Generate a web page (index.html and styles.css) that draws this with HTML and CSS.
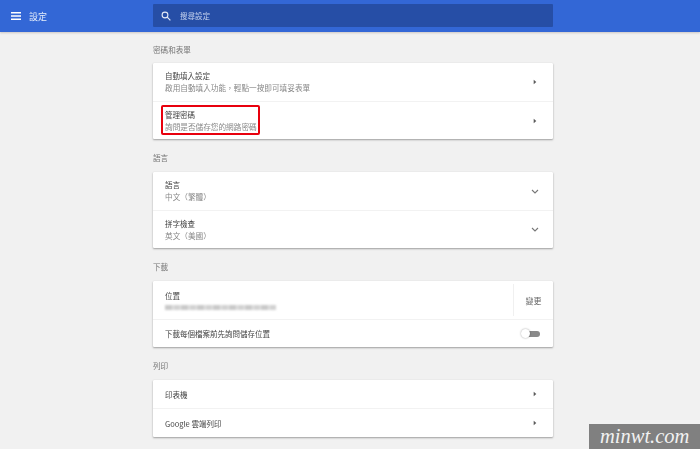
FILE: index.html
```html
<!DOCTYPE html>
<html lang="zh-Hant">
<head>
<meta charset="utf-8">
<title>設定</title>
<link rel="stylesheet" href="styles.css">
</head>
<body>
<header class="topbar">
  <div class="brand">
    <svg class="menu-icon" viewBox="0 0 10 8" width="10" height="8"><path d="M0 0h10v1.4H0zM0 3.3h10v1.4H0zM0 6.6h10V8H0z" fill="#fff"/></svg>
    <span class="brand-title">設定</span>
  </div>
  <div class="search">
    <svg class="search-icon" viewBox="0 0 10 10" width="10" height="10"><circle cx="4" cy="4" r="2.9" fill="none" stroke="#e4eaf7" stroke-width="1.1"/><path d="M6.2 6.2 9.4 9.4" stroke="#e4eaf7" stroke-width="1.2"/></svg>
    <span class="search-text">搜尋設定</span>
  </div>
</header>
<main class="content">
  <section class="section">
    <h2 class="section-title">密碼和表單</h2>
    <div class="card">
      <div class="row row-two">
        <div class="row-text"><div class="row-main">自動填入設定</div><div class="row-sub">啟用自動填入功能，輕點一按即可填妥表單</div></div>
        <svg class="arrow" viewBox="0 0 4 6" width="4" height="6"><path d="M0.7 0.8 3.3 3 0.7 5.2z" fill="#5a5a5a"/></svg>
      </div>
      <div class="row row-two row-border">
        <div class="row-text"><div class="row-main">管理密碼</div><div class="row-sub">詢問是否儲存您的網路密碼</div></div>
        <svg class="arrow" viewBox="0 0 4 6" width="4" height="6"><path d="M0.7 0.8 3.3 3 0.7 5.2z" fill="#5a5a5a"/></svg>
        <div class="highlight"></div>
      </div>
    </div>
  </section>
  <section class="section">
    <h2 class="section-title">語言</h2>
    <div class="card">
      <div class="row row-two">
        <div class="row-text"><div class="row-main">語言</div><div class="row-sub">中文（繁體）</div></div>
        <svg class="chevron" viewBox="0 0 8 5" width="8" height="5"><path d="M1 1 4 4 7 1" fill="none" stroke="#777" stroke-width="1.1"/></svg>
      </div>
      <div class="row row-two row-border">
        <div class="row-text"><div class="row-main">拼字檢查</div><div class="row-sub">英文（美國）</div></div>
        <svg class="chevron" viewBox="0 0 8 5" width="8" height="5"><path d="M1 1 4 4 7 1" fill="none" stroke="#777" stroke-width="1.1"/></svg>
      </div>
    </div>
  </section>
  <section class="section">
    <h2 class="section-title">下載</h2>
    <div class="card">
      <div class="row row-location">
        <div class="row-text"><div class="row-main">位置</div><div class="blurred"></div></div>
        <div class="change"><span>變更</span></div>
      </div>
      <div class="row row-one row-border">
        <div class="row-main">下載每個檔案前先詢問儲存位置</div>
        <div class="toggle"><span class="toggle-track"></span><span class="toggle-knob"></span></div>
      </div>
    </div>
  </section>
  <section class="section">
    <h2 class="section-title">列印</h2>
    <div class="card">
      <div class="row row-print">
        <div class="row-main">印表機</div>
        <svg class="arrow" viewBox="0 0 4 6" width="4" height="6"><path d="M0.7 0.8 3.3 3 0.7 5.2z" fill="#5a5a5a"/></svg>
      </div>
      <div class="row row-print row-border">
        <div class="row-main">Google 雲端列印</div>
        <svg class="arrow" viewBox="0 0 4 6" width="4" height="6"><path d="M0.7 0.8 3.3 3 0.7 5.2z" fill="#5a5a5a"/></svg>
      </div>
    </div>
  </section>
</main>
<div class="watermark">minwt.com</div>
</body>
</html>
```
FILE: styles.css
```css
* { box-sizing: border-box; }
html, body { margin: 0; height: 449px; overflow: hidden; }
body {
  background: #f1f1f1;
  font-family: "Noto Sans CJK TC", "Liberation Sans", sans-serif;
  color: #333;
  position: relative;
}
.topbar {
  height: 32px;
  background: #3367d6;
  box-shadow: 0 1px 2px rgba(120, 100, 90, .3);
  display: flex;
  align-items: flex-start;
}
.brand {
  width: 153px;
  height: 32px;
  padding-left: 11px;
  display: flex;
  align-items: center;
  gap: 8px;
}
.brand-title { color: #e6edfa; font-size: 9px; line-height: 1; filter: blur(.25px); }
.search {
  margin-top: 4px;
  width: 400px;
  height: 23px;
  background: #264ea6;
  display: flex;
  align-items: center;
  padding-left: 8px;
  gap: 9px;
  border-radius: 1px;
}
.search-text { color: #c5d2ee; font-size: 7.5px; line-height: 1; filter: blur(.25px); }
.content { width: 400px; margin-left: 153px; }
.section-title {
  margin: 0;
  height: 19.6px;
  padding-top: 0;
  font-size: 7.6px;
  line-height: 11px;
  font-weight: 400;
  color: #777;
  filter: blur(.25px);
}
.section:first-child .section-title { height: 31.3px; padding-top: 12px; }
.section:nth-child(2) { margin-top: 13.3px; }
.section + .section { margin-top: 13px; }
.section:nth-child(2) .section-title { height: 19.9px; }
.card {
  background: #fff;
  border-radius: 1px;
  box-shadow: 0 1px 2px rgba(0, 0, 0, .34), 0 0 1px rgba(0, 0, 0, .1);
}
.row {
  position: relative;
  display: flex;
  align-items: center;
  justify-content: space-between;
  padding: 0 15px 0 12px;
}
.row-border { border-top: 1px solid #f2f2f2; }
.row-two { height: 38px; }
.row-location { height: 38.5px; padding-right: 0; }
.row-one { height: 28.2px; padding-right: 13px; }
.row-print { height: 28.3px; }
.row-text { padding-bottom: 1px; }
.row-main { font-size: 7.5px; line-height: 11px; color: #444; filter: blur(.25px); }
.row-sub { font-size: 7.65px; line-height: 11px; color: #888; margin-top: 1px; filter: blur(.25px); }
.arrow { margin-right: 1px; flex: none; }
.chevron { flex: none; margin-right: -1px; }
.highlight {
  position: absolute;
  left: 8px;
  top: 3px;
  width: 99px;
  height: 30px;
  border: 2px solid #e8000d;
  border-radius: 2px;
}
.blurred {
  margin-top: 4px;
  width: 111px;
  height: 5px;
  background: repeating-linear-gradient(90deg, #c9c9c9 0 7px, #e0e0e0 7px 9px, #d2d2d2 9px 15px, #ebebeb 15px 16px);
  filter: blur(1.2px);
}
.change {
  width: 40px;
  height: 32px;
  border-left: 1px solid #f0f0f0;
  display: flex;
  align-items: center;
  justify-content: center;
  font-size: 8px;
  color: #666;
  filter: blur(.25px);
}
.toggle { position: relative; width: 19px; height: 9px; flex: none; }
.toggle-track {
  position: absolute;
  left: 2px;
  top: 1.5px;
  width: 17px;
  height: 6px;
  border-radius: 3px;
  background: #8a8a8a;
}
.toggle-knob {
  position: absolute;
  left: 0;
  top: 0;
  width: 9px;
  height: 9px;
  border-radius: 50%;
  background: #fff;
  box-shadow: 0 0 2px rgba(0, 0, 0, .4);
}
.watermark {
  position: absolute;
  right: 0;
  bottom: 0;
  width: 111px;
  height: 25px;
  padding-left: 11px;
  background: #808080;
  color: #f2f2f2;
  font-family: "Liberation Serif", serif;
  font-style: italic;
  font-size: 20.5px;
  line-height: 24px;
}
```
